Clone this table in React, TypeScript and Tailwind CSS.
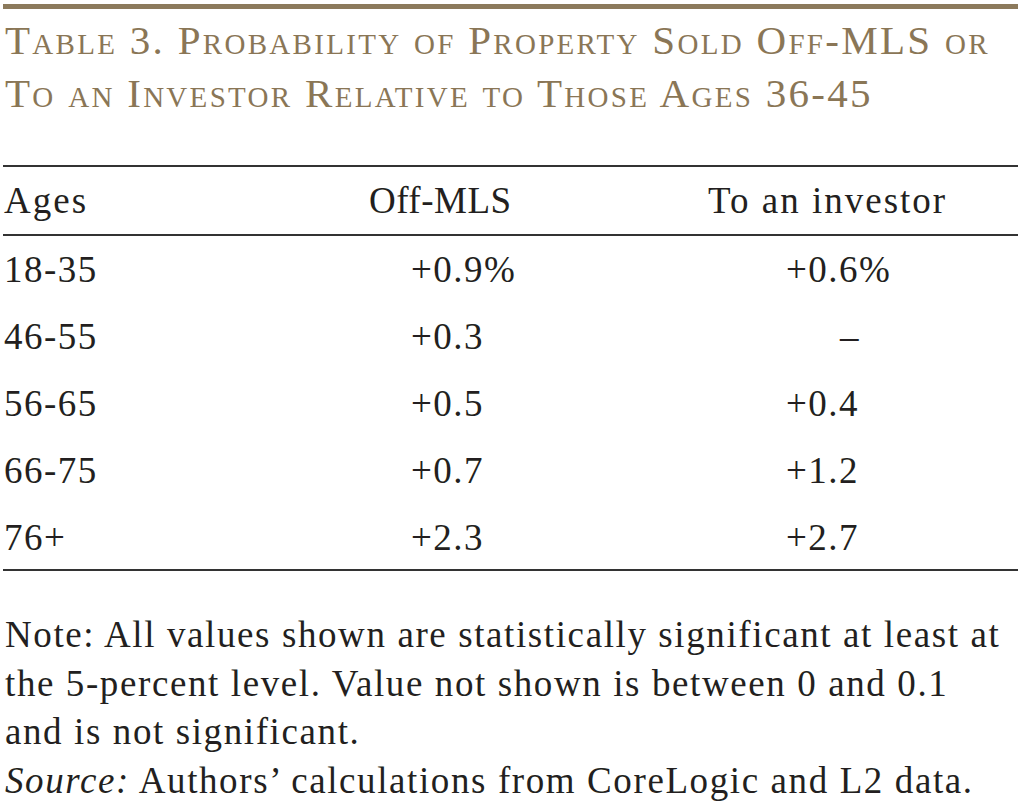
import React from "react";

const rows: { age: string; off: string; inv: string; dash?: boolean }[] = [
  { age: "18-35", off: "+0.9%", inv: "+0.6%" },
  { age: "46-55", off: "+0.3", inv: "–", dash: true },
  { age: "56-65", off: "+0.5", inv: "+0.4" },
  { age: "66-75", off: "+0.7", inv: "+1.2" },
  { age: "76+", off: "+2.3", inv: "+2.7" },
];

export default function App() {
  return (
    <div className="w-[1024px] h-[806px] bg-white overflow-hidden pl-[3px] pr-[6px] pt-[4px] text-[#231f20] [font-family:'Liberation_Serif','Times_New_Roman',serif]">
      <div className="h-[5px] bg-[#8c7a5c]" />
      <div className="mt-[5px] pl-[2px] text-[41px] leading-[53px] tracking-[2.3px] text-[#8a7656] [font-variant:small-caps] whitespace-nowrap">
        <div>Table 3. Probability of Property Sold Off-MLS or</div>
        <div>To an Investor Relative to Those Ages 36-45</div>
      </div>
      <div className="mt-[45px] h-[2px] bg-[#333]" />
      <div className="grid grid-cols-[365px_339px_1fr] h-[67px] items-center text-[37px] leading-[67px] pl-[1px] tracking-[2px]">
        <div>Ages</div>
        <div className="tracking-[0.5px]">Off-MLS</div>
        <div>To an investor</div>
      </div>
      <div className="h-[2px] bg-[#333]" />
      <div className="text-[37px] tracking-[1.5px]">
        {rows.map((r, i) => (
          <div
            key={r.age}
            className={`grid grid-cols-[365px_339px_1fr] pl-[1px] ${i === rows.length - 1 ? "h-[65px] leading-[67px]" : "h-[67px] leading-[67px]"}`}
          >
            <div>{r.age}</div>
            <div className="pl-[42px]">{r.off}</div>
            <div className={r.dash ? "pl-[132px]" : "pl-[78px]"}>{r.inv}</div>
          </div>
        ))}
      </div>
      <div className="h-[2px] bg-[#333]" />
      <div className="mt-[40px] pl-[2px] text-[37px] leading-[48.5px] tracking-[1.6px] whitespace-nowrap">
        <div>Note: All values shown are statistically significant at least at</div>
        <div>the 5-percent level. Value not shown is between 0 and 0.1</div>
        <div>and is not significant.</div>
        <div>
          <span className="italic">Source:</span> Authors’ calculations from CoreLogic and L2 data.
        </div>
      </div>
    </div>
  );
}
